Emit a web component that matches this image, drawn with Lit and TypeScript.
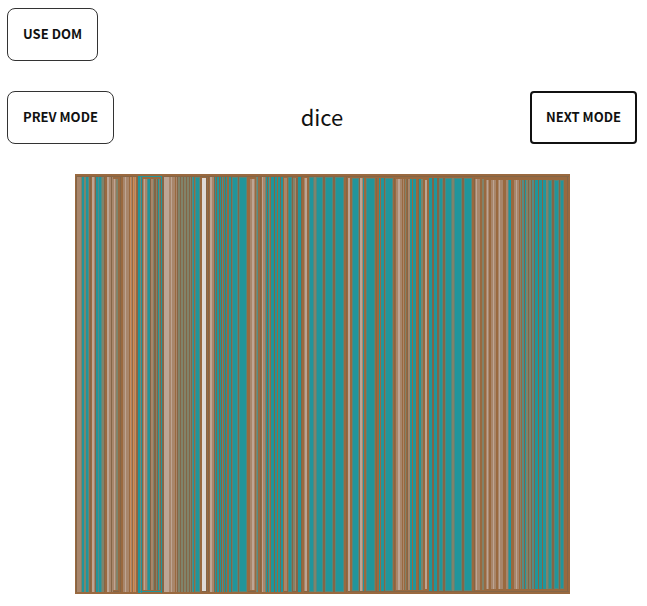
import { LitElement, html, svg, css } from "lit";
import { customElement, state } from "lit/decorators.js";

const COLORS: Record<string, string> = {
  B: "#99693f",
  D: "#846546",
  L: "#a8866b",
  P: "#bda594",
  W: "#dfdad6",
  O: "#cd8c57",
  G: "#80836a",
  S: "#558c85",
  T: "#21959b",
};

// Each group: inset from the frame, then colour code + start column of each strip.
const GROUPS: [number, string][] = [
  [3, "B75 D76 L77 L79 G81 T82 G84 T86 S88 B89 D90 B91 P92 L94 D95 T96 S98 T99 S101 G102 D104 B105"],
  [3, "B106 P107 L109 D111 L112"],
  [5, "L113 P114 L115 G116 B118"],
  [3, "B119 D120 B121 L123 P125 L126 B129 O130 L131 B132 O133 L134 O135 B136 D137"],
  [2, "T138 G140 T141"],
  [5, "D142 L143 P144 L145 S147 T148 D150 L151 G153 D154 G156 D157 T158 G159 D160"],
  [2, "T161 D162"],
  [3, "D163 P164 P166 L169 P171 L172 B175 L176 D177 G178 D180 G181 D183 G184 D186 G187 D189 G190 D191 S192 T193 B194 T195 B200"],
  [4, "W202"],
  [3, "D206 B207 D208 B209 P210 L212 D214 T215 D216 T217 D219 T220 D221 S222 B223 T224 D225 T226 B227 T229 D231 T232 D238 T239 B247"],
  [5, "B248 L250 P252 L254 B255"],
  [3, "G256 S257 B258 D260 B261 P262 L263 G265 T266 D267 T268 G269 B270 T271 D274 T275 B277 T278 D280 T281 B283"],
  [4, "L284 B287"],
  [3, "T288 D292"],
  [4, "G293 L295 D296"],
  [3, "T298 D301 B302"],
  [4, "L304 P305 B307"],
  [3, "T309 G314 T316 D323 T325 D333 T335 B344 D346 B347"],
  [4, "P348 B350 T352 D359 P360 L362 T363 B364"],
  [4, "T366 B375 D376 B377 T379 B380 T381 D384 T385 B393 D394 B395"],
  [5, "L396 P398 L400 B402 L403 B404 G405 B406 D407 L408 T410 B412 T413 B416 D418 T419 G421 B423"],
  [6, "P425 B427"],
  [4, "T429 D432 T434 D437 T439 D443 T445 G452 T454 D462 T464 B472 D474"],
  [5, "L475 P476 L477 B480 G482 B484"],
  [6, "L486 P487 L488 B489 L491 P493 L494 B496 L498 P499 L500 B503 L506 S508 T509 B511 L514 P516 L517 B519 G520 B521 S522 D524 T525 G526 D528 G529 D531 S532 D534 T535 D538 T539 D542 T543 G546 T548 D552 T554 D559 T560 B564"],
];

const LEFT = 75;
const WIDTH = 495;
const HEIGHT = 420;

interface Strip { x: number; w: number; code: string; inset: number }

const strips: Strip[] = GROUPS.flatMap(([inset, runs]) =>
  runs.split(" ").map((run) => ({ x: Number(run.slice(1)) - LEFT, w: 0, code: run[0], inset })),
);
strips.forEach((s, i) => (s.w = (strips[i + 1]?.x ?? 490) - s.x));

const rect = (x: number, y: number, w: number, h: number, fill: string) =>
  svg`<rect x=${x} y=${y} width=${w} height=${h} fill=${fill}></rect>`;

@customElement("tree-map")
class TreeMap extends LitElement {
  static styles = css`
    :host { display: block; width: 100%; max-width: 495px; }
    .map { display: block; width: 100%; height: auto; }
  `;

  private strip({ x, w, code, inset }: Strip) {
    const h = HEIGHT - inset * 2 + 1;
    if (code === "T" && w > 3) {
      return svg`${rect(x, inset, w, h, "#55877b")}${rect(x + 1, inset + 1, w - 2, h - 2, COLORS.T)}`;
    }
    return rect(x, inset, w, h, COLORS[code]);
  }

  render() {
    return html`<svg class="map" viewBox="0 0 ${WIDTH} ${HEIGHT}" shape-rendering="crispEdges" role="img" aria-label="Treemap">
      ${rect(0, 0, WIDTH, HEIGHT, COLORS.B)}
      ${rect(1, 2, WIDTH - 2, 1, COLORS.D)}
      ${rect(1, HEIGHT - 3, WIDTH - 2, 1, COLORS.D)}
      ${rect(492, 3, 1, HEIGHT - 6, COLORS.D)}
      ${strips.map((s) => this.strip(s))}
      ${rect(63, 2, 24, 1, COLORS.T)}
      ${rect(63, HEIGHT - 3, 24, 1, COLORS.T)}
    </svg>`;
  }
}

const MODES = ["dice", "slice", "sliceDice", "binary", "squarify", "resquarify"];

@customElement("app-root")
class AppRoot extends LitElement {
  @state() private mode = 0;
  @state() private dom = false;

  static styles = css`
    :host {
      display: block;
      padding: 8px 10px 12px 7px;
      font-family: "Noto Sans CJK SC", "Noto Sans", sans-serif;
      color: #111;
    }
    .bar {
      display: flex;
      align-items: center;
      justify-content: space-between;
      margin: 30px 0;
    }
    .button {
      box-sizing: border-box;
      height: 53px;
      padding: 0 15px 2px;
      border: 1px solid #333;
      border-radius: 8px;
      background: #fff;
      color: #111;
      font: inherit;
      font-size: 13px;
      font-weight: 700;
      line-height: 20px;
      display: block;
    }
    .active {
      border: 2px solid #111;
      border-radius: 4px;
      padding: 0 14px 2px;
      outline: none;
    }
    .mode { font-size: 22px; line-height: 32px; padding-bottom: 4px; }
    .chart { display: flex; justify-content: center; }
  `;

  private step(by: number) {
    this.mode = (this.mode + by + MODES.length) % MODES.length;
  }

  render() {
    return html`
      <button class="button" @click=${() => (this.dom = !this.dom)}>${this.dom ? "USE CANVAS" : "USE DOM"}</button>
      <div class="bar">
        <button class="button" @click=${() => this.step(-1)}>PREV MODE</button>
        <span class="mode">${MODES[this.mode]}</span>
        <button class="button active" @click=${() => this.step(1)}>NEXT MODE</button>
      </div>
      <div class="chart"><tree-map></tree-map></div>
    `;
  }
}
